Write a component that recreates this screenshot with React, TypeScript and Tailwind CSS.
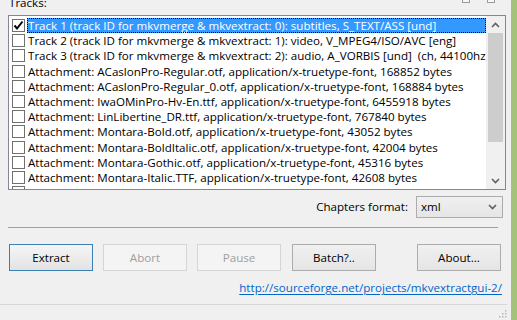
import { useState } from "react";

// ==================== DATA ====================
const ROWS = [
  "Track 1 (track ID for mkvmerge & mkvextract: 0): subtitles, S_TEXT/ASS [und]",
  "Track 2 (track ID for mkvmerge & mkvextract: 1): video, V_MPEG4/ISO/AVC [eng]",
  "Track 3 (track ID for mkvmerge & mkvextract: 2): audio, A_VORBIS [und]  (ch, 44100hz)",
  "Attachment: ACaslonPro-Regular.otf, application/x-truetype-font, 168852 bytes",
  "Attachment: ACaslonPro-Regular_0.otf, application/x-truetype-font, 168884 bytes",
  "Attachment: IwaOMinPro-Hv-En.ttf, application/x-truetype-font, 6455918 bytes",
  "Attachment: LinLibertine_DR.ttf, application/x-truetype-font, 767840 bytes",
  "Attachment: Montara-Bold.otf, application/x-truetype-font, 43052 bytes",
  "Attachment: Montara-BoldItalic.otf, application/x-truetype-font, 42004 bytes",
  "Attachment: Montara-Gothic.otf, application/x-truetype-font, 45316 bytes",
  "Attachment: Montara-Italic.TTF, application/x-truetype-font, 42608 bytes",
  "Attachment: segoeprint.ttf, application/x-truetype-font, 84300 bytes",
];

// ==================== MAIN COMPONENT ====================
export default function App() {
  const [checked, setChecked] = useState<boolean[]>(ROWS.map((_, i) => i === 0));

  const toggle = (i: number) =>
    setChecked((prev) => prev.map((v, j) => (j === i ? !v : v)));

  return (
    <div
      className="flex w-[517px] h-[320px] overflow-hidden bg-[#f0f0f0] text-[11.6px] text-black"
      style={{ fontFamily: '"Open Sans", "Noto Sans", sans-serif' }}
    >
      <div className="flex flex-col w-[511px]">
        {/* Header */}
        <div className="flex h-[15px] overflow-hidden">
          <span className="ml-[9px] -mt-[5px] leading-[15px]">Tracks:</span>
          <div className="ml-auto flex gap-[17px] mr-[16px] -mt-[4px]">
            <div className="w-[8px] h-[7px] border border-[#9a9a9a] bg-[#f7f7f7]" />
            <div className="w-[8px] h-[7px] border border-[#9a9a9a] bg-[#f7f7f7]" />
          </div>
        </div>

        {/* Track list */}
        <div className="ml-[8px] w-[498px] h-[175px] border border-[#828790] bg-white flex overflow-hidden">
          <div className="flex-1 pt-[2px] overflow-hidden">
            {ROWS.map((row, i) => (
              <TrackRow
                key={i}
                label={row}
                checked={checked[i]}
                selected={i === 0}
                onToggle={() => toggle(i)}
              />
            ))}
          </div>
          <Scrollbar />
        </div>

        {/* Chapters format */}
        <div className="flex items-center justify-end mt-[6px] mr-[8px] gap-[8px]">
          <span>Chapters format:</span>
          <div className="w-[87px] h-[22px] border border-[#acacac] bg-gradient-to-b from-[#f0f0f0] to-[#e5e5e5] flex items-center pl-[4px] pr-[5px]">
            <span className="flex-1">xml</span>
            <Chevron down />
          </div>
        </div>

        {/* Separator */}
        <div className="ml-[8px] w-[490px] h-px bg-[#a0a0a0] mt-[9px]" />

        {/* Buttons */}
        <div className="flex items-center mt-[16px] ml-[9px] mr-[10px]">
          <Button label="Extract" variant="default" />
          <Button label="Abort" variant="disabled" className="ml-[10px]" />
          <Button label="Pause" variant="disabled" className="ml-[10px]" />
          <Button label="Batch?.." className="ml-[11px]" />
          <Button label="About..." className="ml-auto" />
        </div>

        {/* Link */}
        <div className="flex justify-end mt-[9px] mr-[9px] leading-[16px]">
          <a href="#" className="text-[#0066cc] underline underline-offset-2">
            http://sourceforge.net/projects/mkvextractgui-2/
          </a>
        </div>

        {/* Status bar */}
        <div className="mt-[8px] w-[507px] h-px bg-[#d7d7d7]" />
        <div className="flex-1 flex justify-end items-end pr-[4px] pb-[2px]">
          <Grip />
        </div>
      </div>

      {/* Window edge */}
      <div className="w-[6px] bg-[#a5c27a]" />
    </div>
  );
}

// ==================== TRACK ROW ====================
interface TrackRowProps {
  label: string;
  checked: boolean;
  selected: boolean;
  onToggle: () => void;
}

function TrackRow({ label, checked, selected, onToggle }: TrackRowProps) {
  return (
    <div className="flex items-center h-[15.2px] whitespace-pre">
      <button
        onClick={onToggle}
        className="ml-[3px] w-[13px] h-[13px] border border-[#707070] bg-white flex items-center justify-center shrink-0"
      >
        {checked && (
          <svg width="11" height="11" viewBox="0 0 11 11">
            <path d="M1.5 5.5 L4 8.5 L9.5 1.5" stroke="#000" strokeWidth="2" fill="none" />
          </svg>
        )}
      </button>
      <span
        className={`ml-[2px] px-[1px] h-[15px] leading-[15px] flex-1 overflow-hidden ${
          selected ? "bg-[#3399ff] text-white outline outline-1 outline-dotted outline-black -outline-offset-1" : ""
        }`}
      >
        {label}
      </span>
    </div>
  );
}

// ==================== SCROLLBAR ====================
function Scrollbar() {
  return (
    <div className="w-[19px] bg-[#f0f0f0] flex flex-col items-center">
      <div className="h-[17px] flex items-center justify-center">
        <Chevron />
      </div>
      <div className="w-[15px] h-[109px] bg-[#cdcdcd]" />
      <div className="flex-1" />
      <div className="h-[17px] flex items-center justify-center">
        <Chevron down />
      </div>
    </div>
  );
}

function Chevron({ down = false }: { down?: boolean }) {
  return (
    <svg width="9" height="6" viewBox="0 0 9 6">
      <path
        d={down ? "M1 1 L4.5 4.5 L8 1" : "M1 5 L4.5 1.5 L8 5"}
        stroke="#606060"
        strokeWidth="1.6"
        fill="none"
      />
    </svg>
  );
}

// ==================== BUTTON ====================
interface ButtonProps {
  label: string;
  variant?: "normal" | "default" | "disabled";
  className?: string;
}

function Button({ label, variant = "normal", className = "" }: ButtonProps) {
  const styles = {
    normal: "border-[#acacac] bg-gradient-to-b from-[#f0f0f0] to-[#e5e5e5] text-black",
    default: "border-[#3c7fb1] bg-gradient-to-b from-[#f5f5f5] to-[#e3e3e3] text-black",
    disabled: "border-[#d5d5d5] bg-[#f4f4f4] text-[#a0a0a0]",
  }[variant];

  return (
    <button className={`w-[84px] h-[27px] border ${styles} ${className}`}>
      {label}
    </button>
  );
}

// ==================== GRIP ====================
function Grip() {
  return (
    <svg width="10" height="10" viewBox="0 0 10 10">
      {[
        [8, 2],
        [8, 5],
        [5, 5],
        [8, 8],
        [5, 8],
        [2, 8],
      ].map(([x, y], i) => (
        <rect key={i} x={x} y={y} width="1.5" height="1.5" fill="#b8b8b8" />
      ))}
    </svg>
  );
}
